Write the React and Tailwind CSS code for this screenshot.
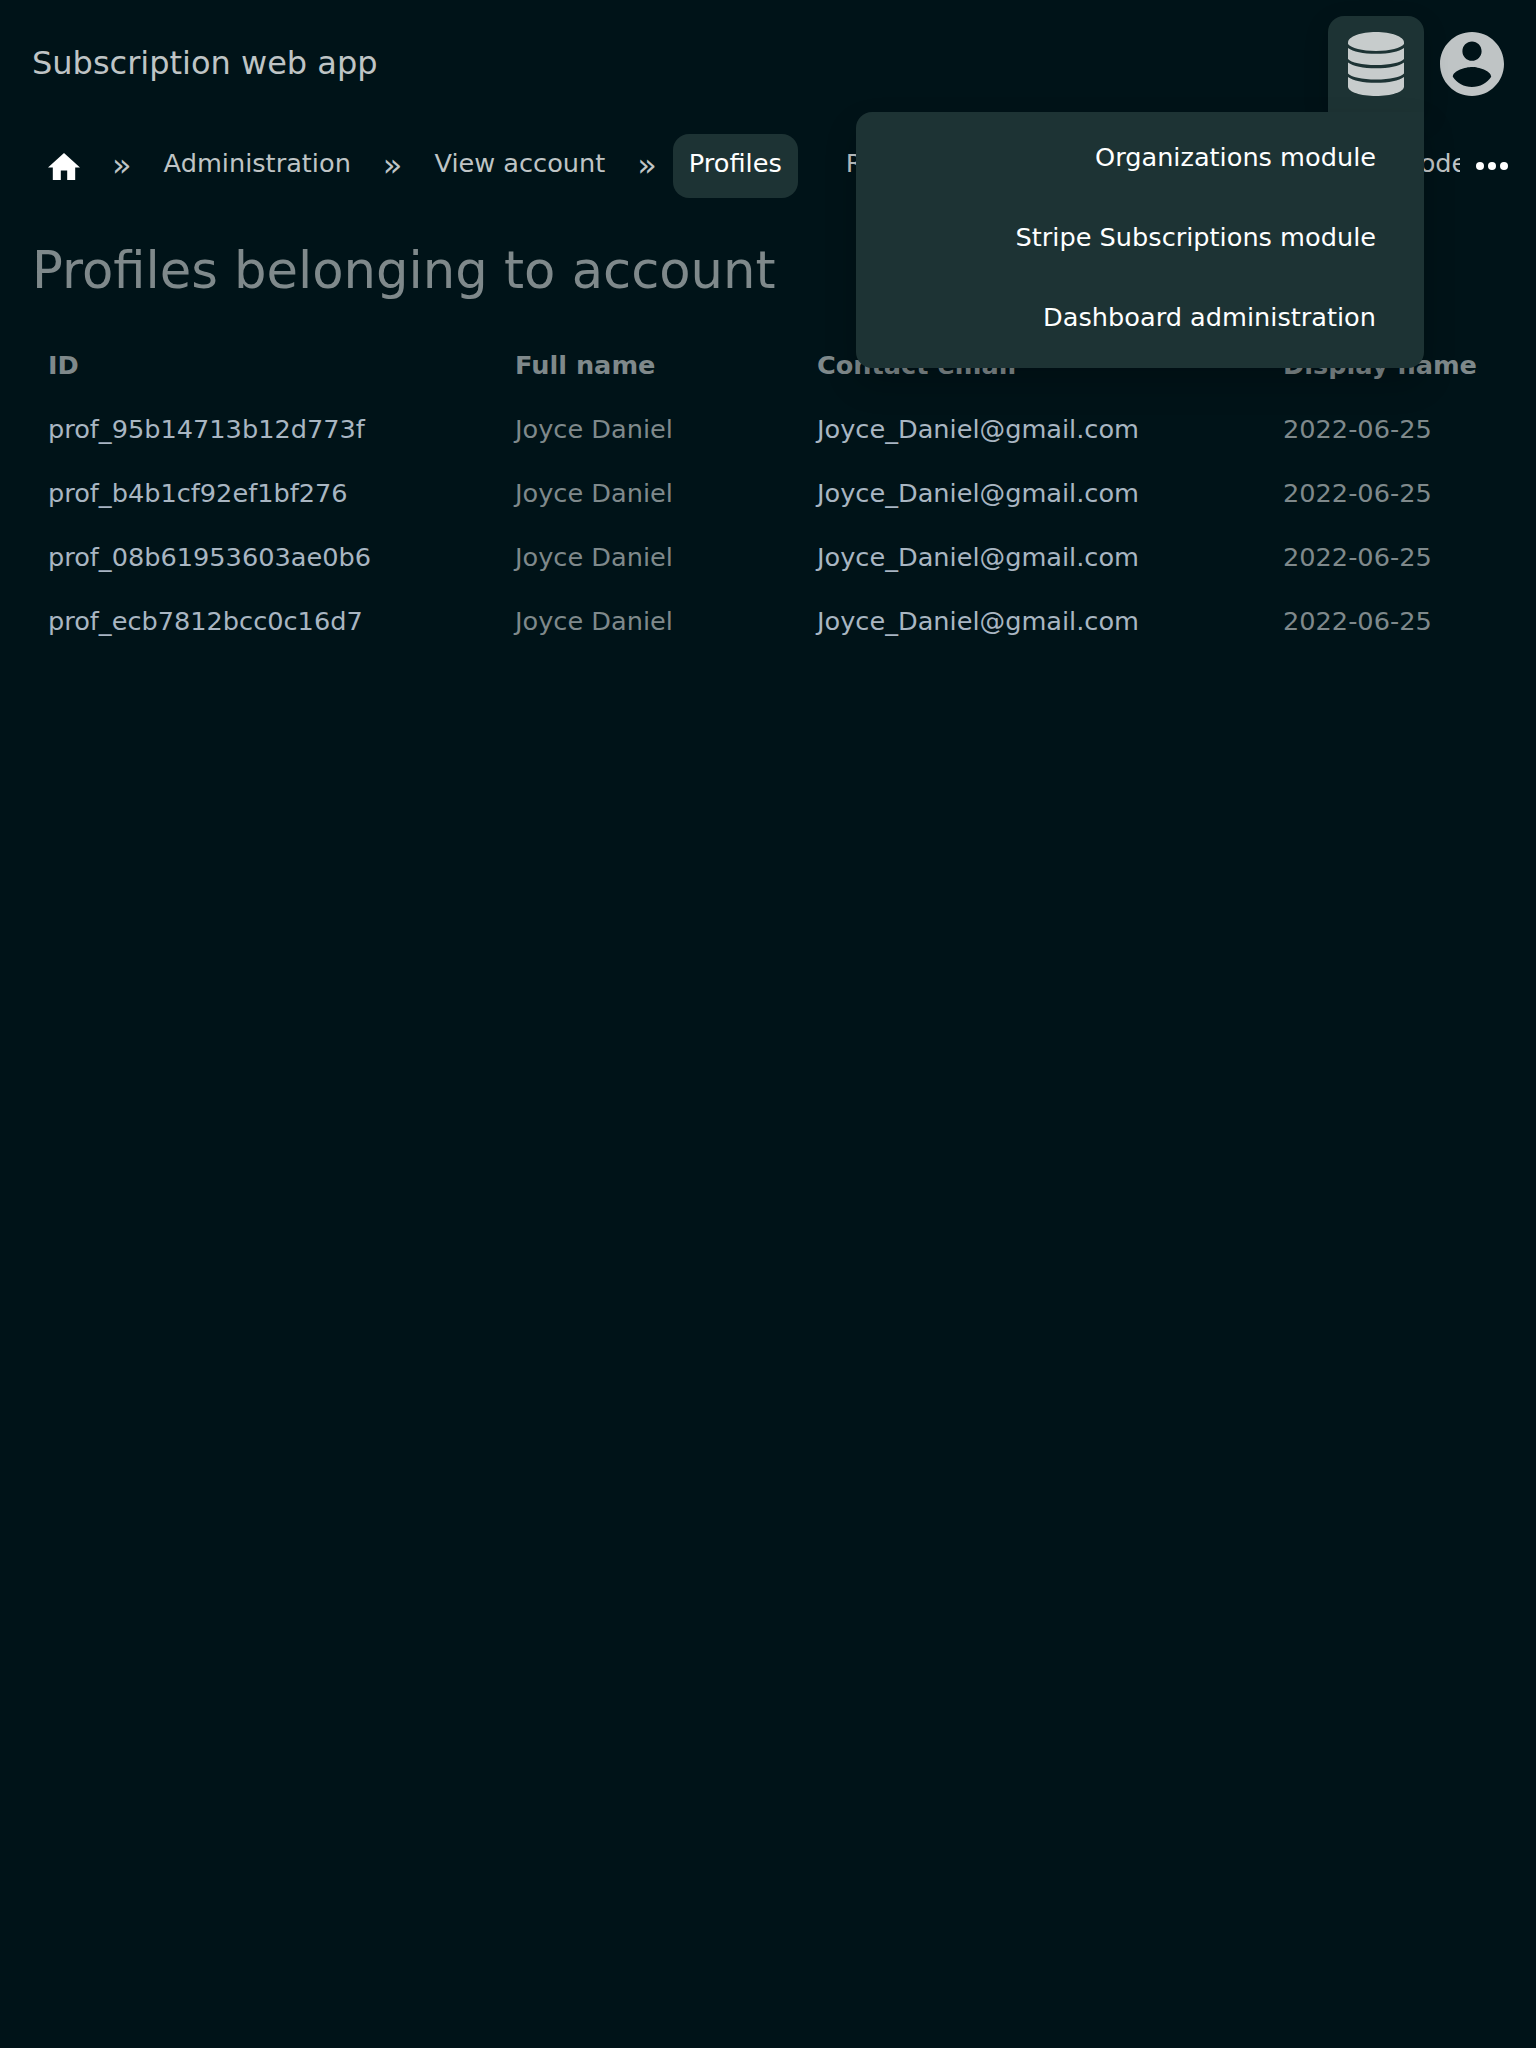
import React from "react";

const crumbText = "h-16 shrink-0 whitespace-nowrap px-4 pt-[13px] text-[#bfc4c5]";

function Sep() {
  return (
    <span className="flex h-16 shrink-0 px-4 pt-[11px] text-[32px] leading-[40px] text-[#bfc4c5]">»</span>
  );
}

function HomeIcon() {
  return (
    <svg className="h-[27.2px] w-8" viewBox="2 3 20 17" fill="#fff">
      <path d="M10 20v-6h4v6h5v-8h3L12 3 2 12h3v8z" />
    </svg>
  );
}

function DatabaseIcon() {
  return (
    <svg className="h-16 w-14" viewBox="0 0 56 64" fill="#c7cccc">
      <path d="M28 0C43 0 56 4.500 56 10.500V12C53 16 42 19 28 19S3 16 0 12V10.500C0 4.500 13 0 28 0Z" />
      <path d="M0 16C5 19.800 15 21.800 28 21.800S51 19.800 56 16V27C53 30.500 42 33 28 33S3 30.500 0 27Z" />
      <path d="M0 30.500C5 34.300 15 36.300 28 36.300S51 34.300 56 30.500V41.500C53 45 42 47.500 28 47.500S3 45 0 41.500Z" />
      <path d="M0 45C5 48.800 15 50.800 28 50.800S51 48.800 56 45V54.500C56 60 43 64 28 64S0 60 0 54.500Z" />
    </svg>
  );
}

function AccountIcon() {
  return (
    <svg className="h-16 w-16" viewBox="2 2 20 20" fill="#bfc4c5">
      <path d="M12 2C6.480 2 2 6.480 2 12s4.480 10 10 10 10-4.480 10-10S17.520 2 12 2zm0 3c1.660 0 3 1.340 3 3s-1.340 3-3 3-3-1.340-3-3 1.340-3 3-3zm0 14.200c-2.500 0-4.710-1.280-6-3.220.030-1.990 4-3.080 6-3.080 1.990 0 5.970 1.090 6 3.080-1.290 1.940-3.500 3.220-6 3.220z" />
    </svg>
  );
}

const menu = ["Organizations module", "Stripe Subscriptions module", "Dashboard administration"];
const ids = ["prof_95b14713b12d773f", "prof_b4b1cf92ef1bf276", "prof_08b61953603ae0b6", "prof_ecb7812bcc0c16d7"];
const row = "grid h-16 grid-cols-[467px_302px_466px_1fr] items-center pl-12";

export default function App() {
  return (
    <div className="h-[2048px] w-[1536px] overflow-hidden bg-[#001318] font-['DejaVu_Sans',sans-serif] text-[25.6px] leading-[32px] text-[#7f898b]">
      <header className="flex h-32 items-start justify-between pl-8 pt-4">
        <div className="pt-[27px] text-[32px] leading-[40px] text-[#bfc4c5]">Subscription web app</div>
        <div className="flex pr-8">
          <div className="relative z-10 flex h-24 w-24 justify-center rounded-t-2xl bg-[#1d3334] pt-4 shadow-[0_8px_24px_rgba(0,0,0,0.2)]">
            <DatabaseIcon />
            <ul className="absolute right-0 top-24 flex h-64 w-[568px] flex-col rounded-2xl rounded-tr-none bg-[#1d3334] pt-[5px] shadow-[0_16px_32px_rgba(0,0,0,0.2)]">
              {menu.map((m) => (
                <li key={m} className="flex h-20 items-center justify-end pr-12 text-white">{m}</li>
              ))}
            </ul>
          </div>
          <div className="ml-4 pt-4"><AccountIcon /></div>
        </div>
      </header>
      <nav className="flex h-[102px] pl-8 pt-[6px]">
        <div className="flex w-[1428px] overflow-hidden">
          <div className="flex h-16 w-16 shrink-0 justify-center pt-[19px]"><HomeIcon /></div>
          <Sep />
          <div className={crumbText}>Administration</div>
          <Sep />
          <div className={crumbText}>View account</div>
          <Sep />
          <div className="h-16 shrink-0 whitespace-nowrap rounded-2xl bg-[#1d3334] px-4 pt-[13px] text-white">Profiles</div>
          <div className={`${crumbText} ml-8 w-[556px]`}>Reset codes</div>
          <div className={`${crumbText}`}>Code</div>
        </div>
        <svg className="ml-4 mt-7 h-2 w-8" viewBox="0 0 32 8" fill="#fff">
          <circle cx="4" cy="4" r="4" />
          <circle cx="16" cy="4" r="4" />
          <circle cx="28" cy="4" r="4" />
        </svg>
      </nav>
      <main>
        <h1 className="h-[103px] pl-8 pt-[8px] text-[51.2px] leading-[64px]">Profiles belonging to account</h1>
        <div className={`${row} font-bold`}>
          <span>ID</span>
          <span>Full name</span>
          <span>Contact email</span>
          <span>Display name</span>
        </div>
        {ids.map((id) => (
          <div key={id} className={row}>
            <span className="text-[#a9b6c2]">{id}</span>
            <span>Joyce Daniel</span>
            <span className="text-[#a9b6c2]">Joyce_Daniel@gmail.com</span>
            <span>2022-06-25</span>
          </div>
        ))}
      </main>
    </div>
  );
}
